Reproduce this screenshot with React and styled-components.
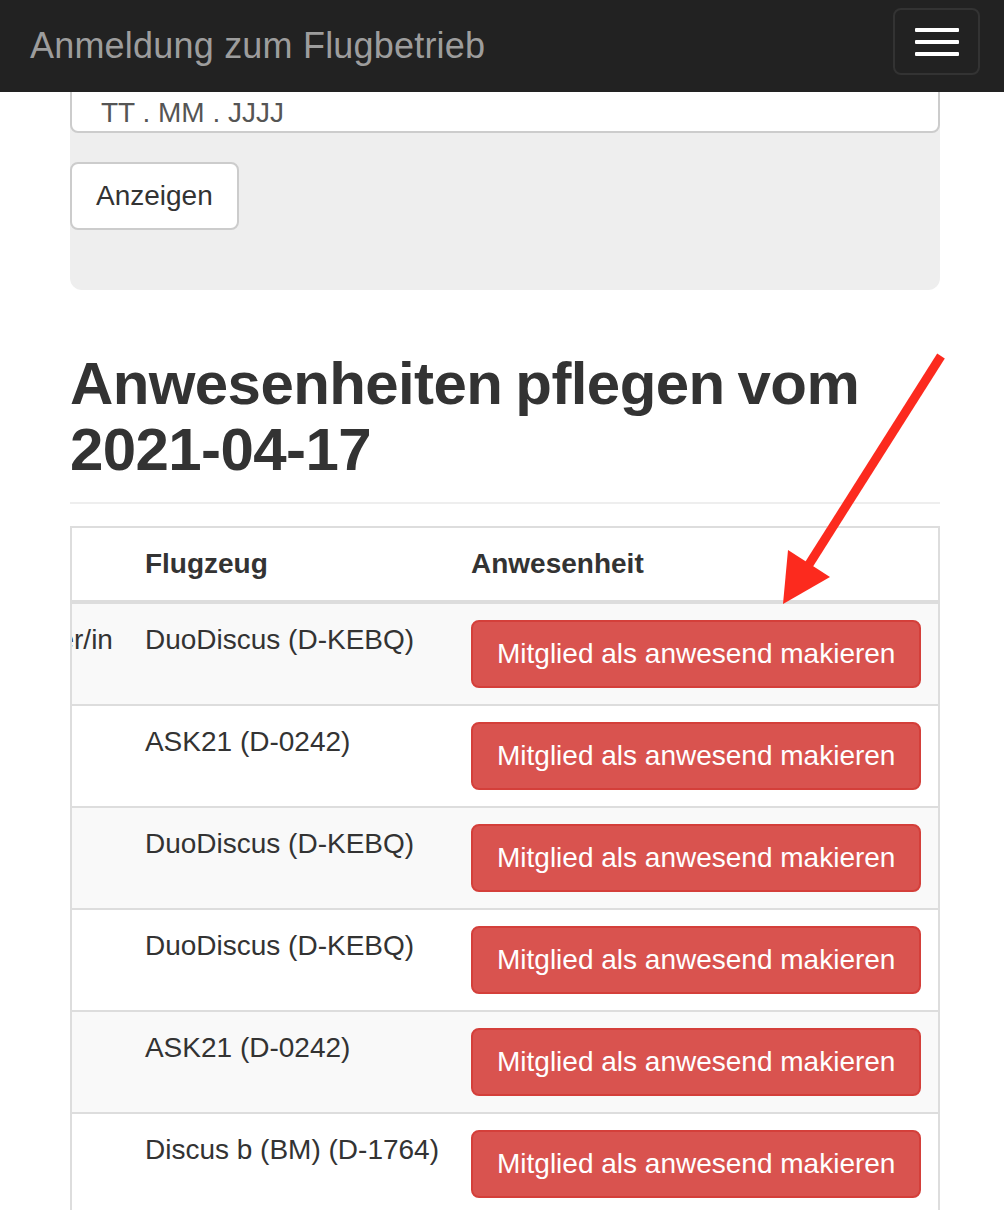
import React from 'react';
import styled, { createGlobalStyle } from 'styled-components';

const GlobalStyle = createGlobalStyle`
  html, body {
    margin: 0;
    padding: 0;
    background: #fff;
    font-family: "Liberation Sans", Arial, Helvetica, sans-serif;
    color: #333;
  }
  * { box-sizing: border-box; }
`;

const Navbar = styled.nav`
  position: fixed;
  top: 0;
  left: 0;
  right: 0;
  height: 92px;
  background: #222;
  display: flex;
  align-items: center;
  justify-content: space-between;
  padding: 0 24px 0 30px;
  z-index: 10;
`;

const Brand = styled.a`
  font-size: 36px;
  color: #9d9d9d;
  text-decoration: none;
  letter-spacing: 0.2px;
`;

const Toggle = styled.button`
  width: 87px;
  height: 67px;
  margin-top: -9px;
  border: 2px solid #333;
  border-radius: 8px;
  background: transparent;
  display: flex;
  flex-direction: column;
  align-items: center;
  justify-content: center;
  gap: 8px;
  padding: 0;
`;

const IconBar = styled.span`
  display: block;
  width: 44px;
  height: 4px;
  border-radius: 1px;
  background: #fff;
`;

const Container = styled.main`
  width: 870px;
  margin-left: 70px;
  padding-bottom: 40px;
`;

const Well = styled.section`
  background: #eee;
  border-radius: 0 0 12px 12px;
  padding: 30px 0 60px;
`;

const DateInput = styled.input`
  display: block;
  width: 100%;
  font-family: inherit;
  font-size: 28px;
  line-height: 28px;
  color: #555;
  background: #fff;
  border: 2px solid #ccc;
  border-radius: 8px;
  padding: 65px 24px 2px 29px;
  outline: none;
`;

const DefaultButton = styled.button`
  margin-top: 29px;
  font-family: inherit;
  font-size: 28px;
  line-height: 40px;
  color: #333;
  background: #fff;
  border: 2px solid #ccc;
  border-radius: 8px;
  padding: 12px 24px;
`;

const PageHeader = styled.h2`
  margin: 61px 0 0;
  padding-bottom: 19px;
  border-bottom: 2px solid #eee;
  font-size: 60px;
  line-height: 66px;
  font-weight: 700;
  letter-spacing: -0.6px;
  word-spacing: -3px;
  color: #333;
`;

const TableScroll = styled.div`
  margin-top: 22px;
  border: 2px solid #ddd;
  border-bottom: none;
  display: flex;
  justify-content: flex-end;
  overflow: hidden;
`;

const Table = styled.table`
  flex-shrink: 0;
  border-collapse: collapse;
  font-size: 28px;
  line-height: 40px;
  white-space: nowrap;
`;

const Th = styled.th`
  text-align: left;
  vertical-align: bottom;
  padding: 16px;
  font-weight: 700;
  border-bottom: 4px solid #ddd;
  width: ${p => p.$w ? `${p.$w}px` : 'auto'};
`;

const Row = styled.tr`
  background: ${p => p.$striped ? '#f9f9f9' : '#fff'};
`;

const Td = styled.td`
  vertical-align: top;
  padding: 16px;
  border-top: 2px solid #ddd;
`;

const DangerButton = styled.button`
  font-family: inherit;
  font-size: 28px;
  line-height: 40px;
  color: #fff;
  background: #d9534f;
  border: 2px solid #d43f3a;
  border-radius: 8px;
  padding: 12px 24px;
  white-space: nowrap;
`;

const Arrow = styled.svg`
  position: absolute;
  left: 0;
  top: 0;
  pointer-events: none;
  z-index: 5;
`;

const rows = [
  { role: 'Fluglehrer/in', plane: 'DuoDiscus (D-KEBQ)' },
  { role: '', plane: 'ASK21 (D-0242)' },
  { role: '', plane: 'DuoDiscus (D-KEBQ)' },
  { role: '', plane: 'DuoDiscus (D-KEBQ)' },
  { role: '', plane: 'ASK21 (D-0242)' },
  { role: '', plane: 'Discus b (BM) (D-1764)' },
];

export default function App() {
  return (
    <>
      <GlobalStyle />
      <Navbar>
        <Brand href="#">Anmeldung zum Flugbetrieb</Brand>
        <Toggle aria-label="Navigation">
          <IconBar />
          <IconBar />
          <IconBar />
        </Toggle>
      </Navbar>
      <Container>
        <Well>
          <DateInput type="text" defaultValue="TT . MM . JJJJ" />
          <DefaultButton>Anzeigen</DefaultButton>
        </Well>
        <PageHeader>Anwesenheiten pflegen vom 2021-04-17</PageHeader>
        <TableScroll>
          <Table>
            <thead>
              <tr>
                <Th>Rolle</Th>
                <Th>Flugzeug</Th>
                <Th $w={483}>Anwesenheit</Th>
              </tr>
            </thead>
            <tbody>
              {rows.map((r, i) => (
                <Row key={i} $striped={i % 2 === 0}>
                  <Td>{r.role}</Td>
                  <Td>{r.plane}</Td>
                  <Td>
                    <DangerButton>Mitglied als anwesend makieren</DangerButton>
                  </Td>
                </Row>
              ))}
            </tbody>
          </Table>
        </TableScroll>
      </Container>
      <Arrow width="1004" height="1210" viewBox="0 0 1004 1210">
        <line x1="941" y1="356" x2="808" y2="566" stroke="#fc2a1e" strokeWidth="9" />
        <polygon points="783,604 788,550 830,577" fill="#fc2a1e" />
      </Arrow>
    </>
  );
}
